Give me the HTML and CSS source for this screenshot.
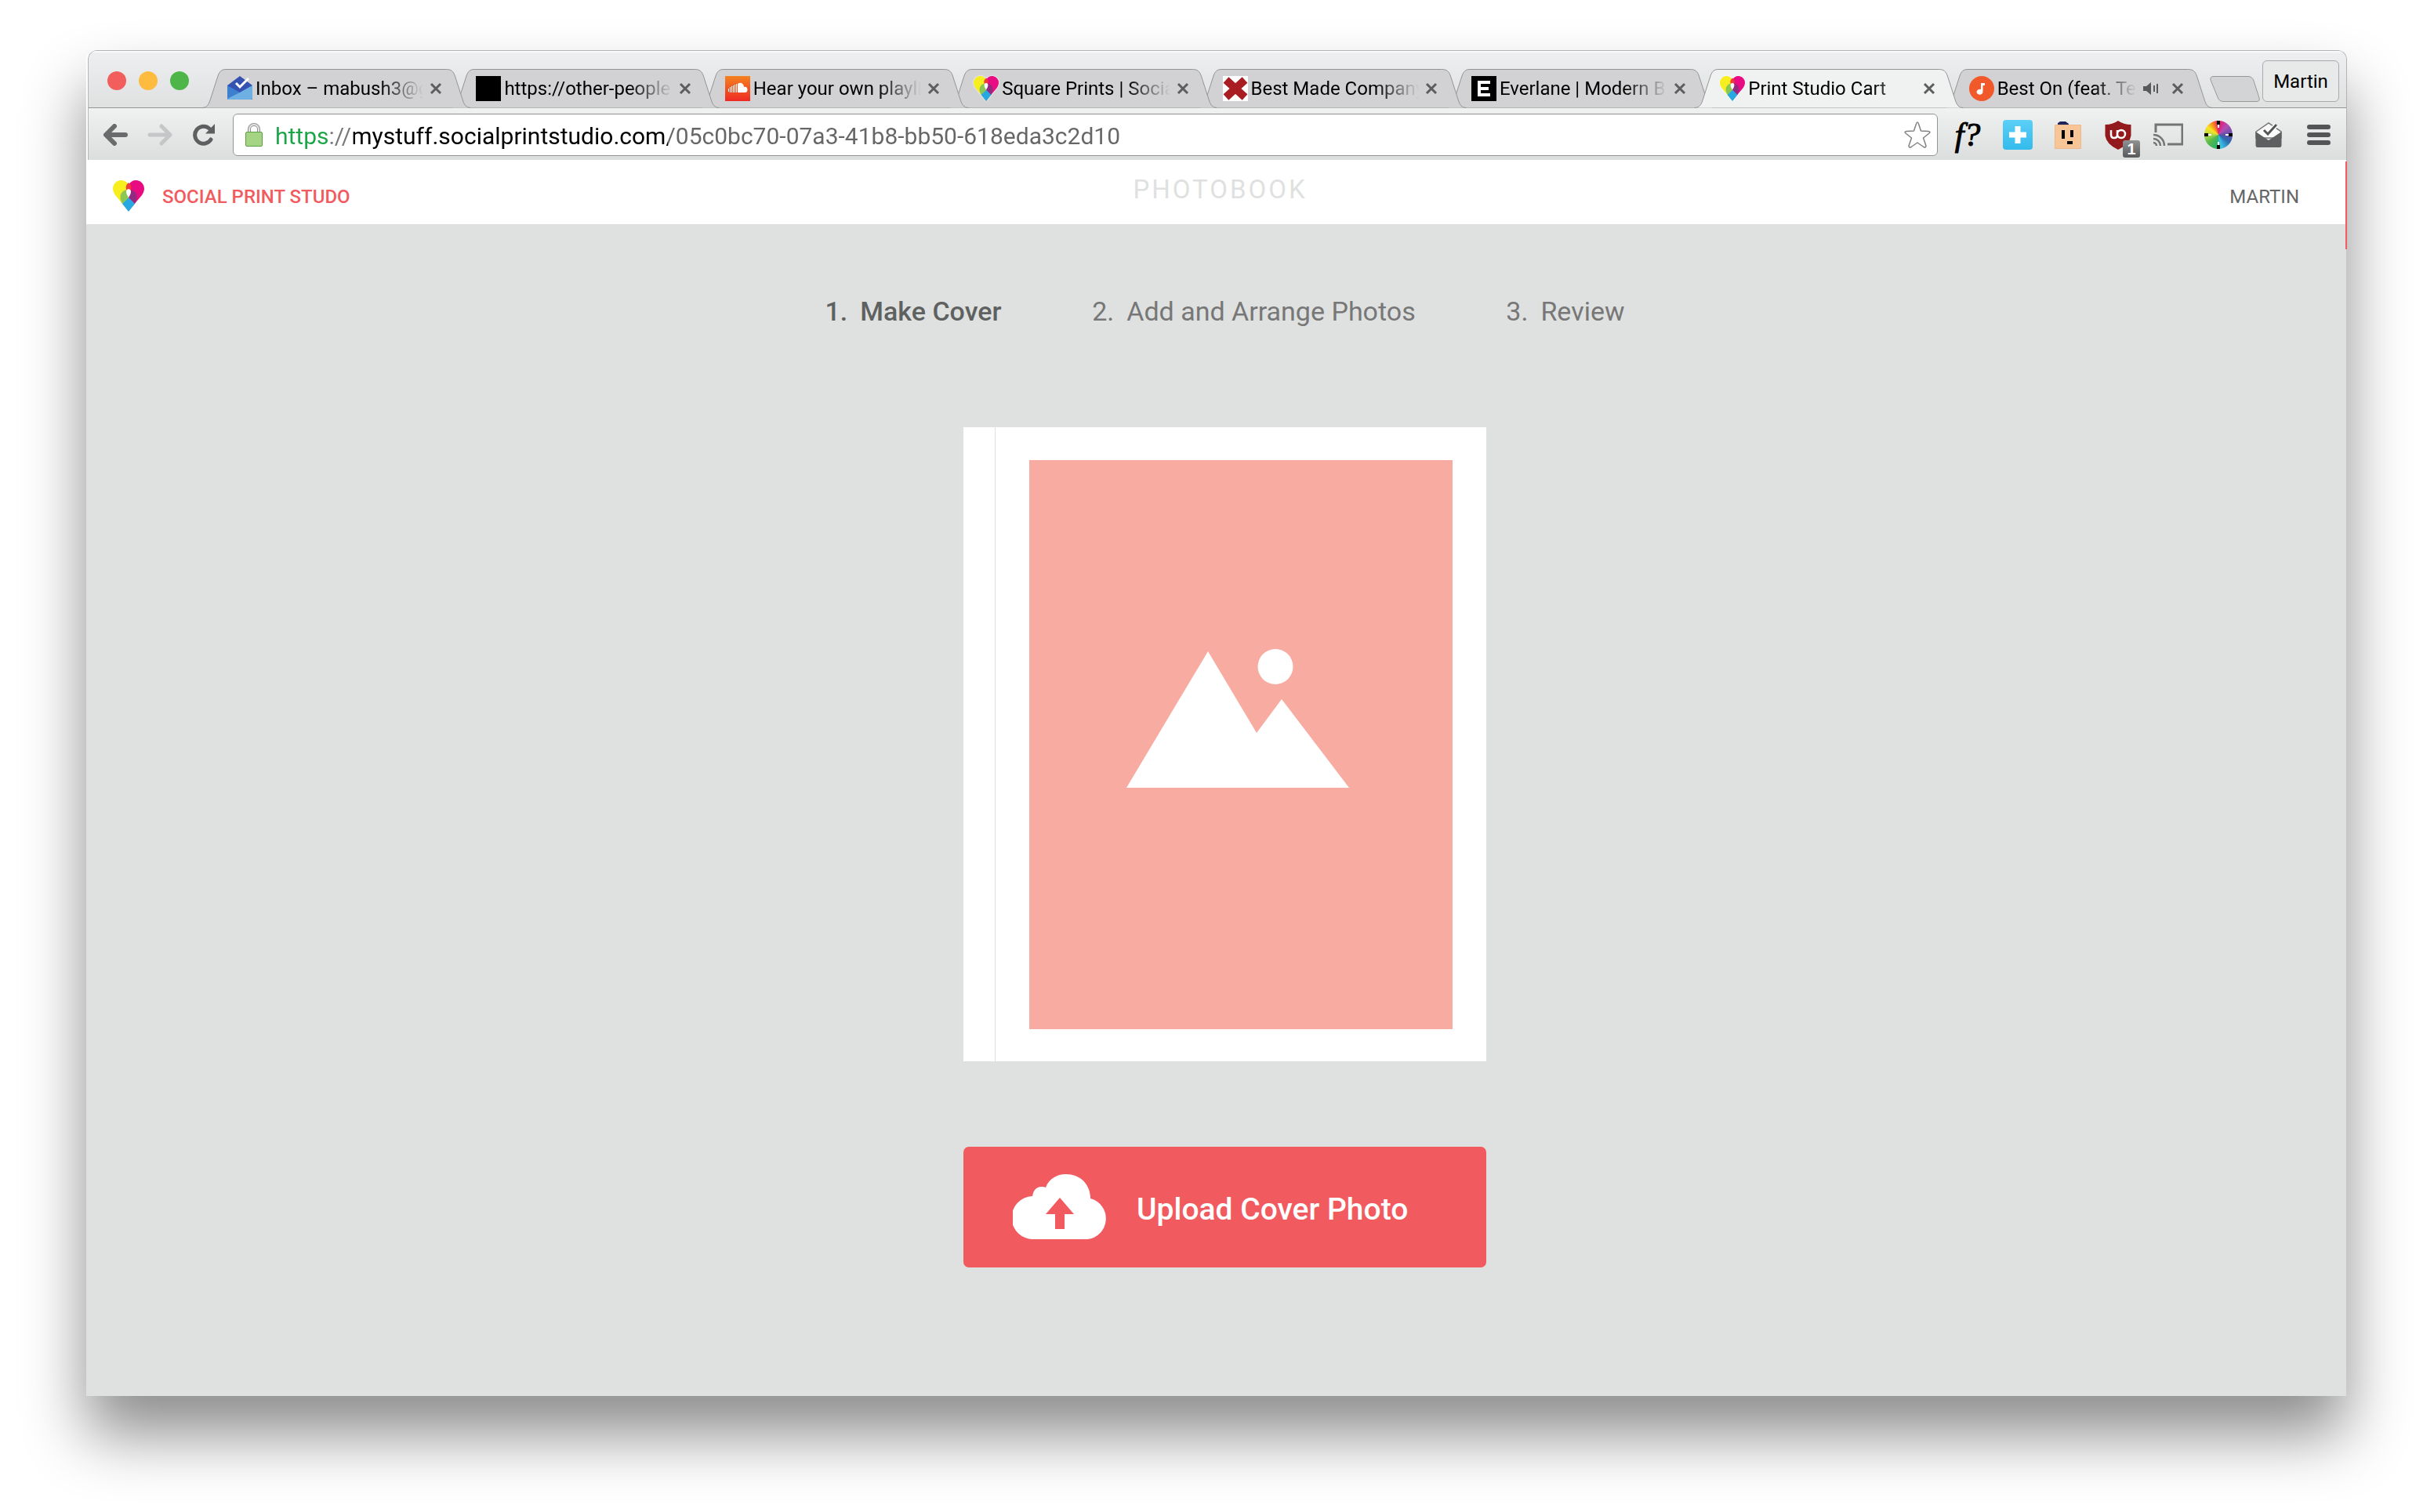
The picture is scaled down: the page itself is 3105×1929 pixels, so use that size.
FILE: index.html
```html
<!DOCTYPE html>
<html lang="en">
<head>
<meta charset="utf-8">
<title>Print Studio Cart</title>
<link rel="stylesheet" href="styles.css">
</head>
<body>
<svg class="defs" aria-hidden="true">
  <symbol id="heart" viewBox="0 0 40 40">
    <path fill="#f6ee1f" d="M20 39L3 19C1 16 0 13 0 10.500A10.500 10.500 0 0 1 20 6Z"/>
    <path fill="#e90b82" d="M20 39L37 19C39 16 40 13 40 10.500A10.500 10.500 0 0 0 20 6Z"/>
    <path fill="#ee3b3a" d="M20 3C16 6 16 10 18 14H22C24 10 24 6 20 3Z"/>
    <path fill="#8bc751" d="M17 12C8 15 8 23 12 30L20 22Z"/>
    <path fill="#932980" d="M23 12C32 15 32 23 28 30L20 22Z"/>
    <path fill="#fff" d="M20 11C16 12 16 16 20 22C24 16 24 12 20 11Z"/>
    <path fill="#27a8e0" d="M20 22L12 30L20 40L28 30Z"/>
  </symbol>
  <symbol id="tab-shape" viewBox="0 0 344 50" preserveAspectRatio="none">
    <path vector-effect="non-scaling-stroke" d="M0 49.500C6 49 8 46 10 40L20 9C22 3 25 .500 30 .500H312C318 .500 321 3 323 9L333 40C335 46 337 49 343 49.500"/>
  </symbol>
  <symbol id="cross" viewBox="0 0 16 16"><path d="M2 2L14 14M14 2L2 14" stroke="#5c5d5e" stroke-width="3" fill="none"/></symbol>
</svg>

<div class="window">
  <div class="chrome">
    <div class="titlebar">
      <div class="lights">
        <button class="light light-close" aria-label="Close window"></button>
        <button class="light light-min" aria-label="Minimise"></button>
        <button class="light light-zoom" aria-label="Zoom"></button>
      </div>
      <nav class="tabs" aria-label="Tabs">
        <div class="tab">
          <svg class="shape"><use href="#tab-shape"/></svg>
          <svg class="favicon" viewBox="0 0 32 32"><path fill="#3551b2" d="M0 12L16 0L32 12V24H0Z"/><path fill="#3d80d0" d="M0 12L16 21L32 12V30H0Z"/><path fill="#6fb0e4" d="M32 12V28Q32 30 30 30H2Q0 30 0 29L16 21Z"/><path fill="none" stroke="#fff" stroke-width="3" d="M11 9L16 14L27 3"/></svg>
          <a class="title" href="#">Inbox – mabush3@g</a>
          <button class="close" aria-label="Close tab"><svg><use href="#cross"/></svg></button>
        </div>
        <div class="tab">
          <svg class="shape"><use href="#tab-shape"/></svg>
          <svg class="favicon" viewBox="0 0 32 32"><path d="M0 0H32V32H0Z"/></svg>
          <a class="title" href="#">https://other-people</a>
          <button class="close" aria-label="Close tab"><svg><use href="#cross"/></svg></button>
        </div>
        <div class="tab">
          <svg class="shape"><use href="#tab-shape"/></svg>
          <svg class="favicon" viewBox="0 0 32 32"><defs><linearGradient id="sc" x2="0" y2="1"><stop stop-color="#f5821f"/><stop offset="1" stop-color="#ee2a24"/></linearGradient></defs><path fill="url(#sc)" d="M0 0H32V32H0Z"/><path stroke="#fff" d="M4.500 16v4M6.500 14v7M8.500 13v8M10.500 12v9M12.500 11v10M14.500 10v11"/><path fill="#fff" d="M16 10C20 7 24 10 24 14C27 13 28.500 15 28.500 17.500Q28.500 21 25 21H16Z"/></svg>
          <a class="title" href="#">Hear your own playli</a>
          <button class="close" aria-label="Close tab"><svg><use href="#cross"/></svg></button>
        </div>
        <div class="tab">
          <svg class="shape"><use href="#tab-shape"/></svg>
          <svg class="favicon halo"><use href="#heart"/></svg>
          <a class="title" href="#">Square Prints | Socia</a>
          <button class="close" aria-label="Close tab"><svg><use href="#cross"/></svg></button>
        </div>
        <div class="tab">
          <svg class="shape"><use href="#tab-shape"/></svg>
          <svg class="favicon" viewBox="0 0 32 32"><path fill="#fff" d="M0 0H32V32H0Z"/><path stroke="#a91d22" stroke-width="10" d="M4 5L28 27M28 5L4 27"/></svg>
          <a class="title" href="#">Best Made Company</a>
          <button class="close" aria-label="Close tab"><svg><use href="#cross"/></svg></button>
        </div>
        <div class="tab">
          <svg class="shape"><use href="#tab-shape"/></svg>
          <svg class="favicon" viewBox="0 0 32 32"><path d="M0 0H32V32H0Z"/><path fill="none" stroke="#fff" stroke-width="4" d="M24 8H10V24H24M10 16H22"/></svg>
          <a class="title" href="#">Everlane | Modern B</a>
          <button class="close" aria-label="Close tab"><svg><use href="#cross"/></svg></button>
        </div>
        <div class="tab active">
          <svg class="shape"><use href="#tab-shape"/></svg>
          <svg class="favicon halo"><use href="#heart"/></svg>
          <a class="title" href="#" aria-current="page">Print Studio Cart</a>
          <button class="close" aria-label="Close tab"><svg><use href="#cross"/></svg></button>
        </div>
        <div class="tab">
          <svg class="shape"><use href="#tab-shape"/></svg>
          <svg class="favicon" viewBox="0 0 32 32"><circle cx="16" cy="16" r="16" fill="#f2592a"/><path fill="#fff" d="M15 9H20V12H17.500V20A4 3.500 0 1 1 15 17Z"/></svg>
          <a class="title" href="#">Best On (feat. Tei</a>
          <svg class="sound" viewBox="0 0 20 18"><path fill="#58595b" d="M0 6H4L10 1V17L4 12H0Z"/><path stroke="#58595b" stroke-width="2" d="M14 5V13M18 3V15"/></svg>
          <button class="close" aria-label="Close tab"><svg><use href="#cross"/></svg></button>
        </div>
      </nav>
      <button class="new-tab" aria-label="New tab"><svg viewBox="0 0 64 33"><path fill="#d3d4d5" stroke="#97989a" d="M5 .500H49Q54 .500 56 6L63 28Q64 32.500 60 32.500H17Q12 32.500 10 27L1 5Q0 .500 5 .500Z"/></svg></button>
      <button class="profile">Martin</button>
    </div>

    <div class="toolbar">
      <button class="tool nav" aria-label="Back"><svg width="32" height="28" viewBox="0 0 32 28"><path fill="none" stroke="#6a6b6c" stroke-width="6" stroke-linecap="round" stroke-linejoin="round" d="M14 3L3 14L14 25M4 14H28"/></svg></button>
      <button class="tool nav" aria-label="Forward"><svg width="32" height="28" viewBox="0 0 32 28"><path fill="none" stroke="#c5c6c7" stroke-width="5" stroke-linecap="round" stroke-linejoin="round" d="M18 3L29 14L18 25M28 14H3"/></svg></button>
      <button class="tool nav" aria-label="Reload"><svg width="28" height="28" viewBox="0 0 28 28"><path fill="none" stroke="#5e5f60" stroke-width="5" stroke-linecap="round" d="M23 20A11 11 0 1 1 21 6"/><path fill="#5e5f60" d="M28 0V12.500H16Z"/></svg></button>
      <div class="omnibox">
        <svg width="22" height="30" viewBox="0 0 22 30"><path fill="none" stroke="#8d8e8f" stroke-width="4" d="M5 13V8A6 6 0 0 1 17 8V13"/><path fill="none" stroke="#e4e5e5" stroke-width="2" d="M5 13V8A6 6 0 0 1 17 8V13"/><rect x=".500" y="11.500" width="21" height="18" rx="1.500" fill="#a5d483" stroke="#5d9f45"/></svg>
        <input class="url" type="text" aria-label="Address" value="https://mystuff.socialprintstudio.com/05c0bc70-07a3-41b8-bb50-618eda3c2d10">
        <button class="star" aria-label="Bookmark"><svg width="34" height="34" viewBox="0 0 34 34"><path fill="#fff" stroke="#808183" stroke-width="1.500" stroke-linejoin="round" d="M17 1Q18 1 18.500 3L21.500 12L31 12.500Q34 13 32 15L24.500 21L28 31Q28 34 25 32.500L17 27L9 32.500Q6 34 6 31L9.500 21L2 15Q0 13 3 12.500L12.500 12L15.500 3Q16 1 17 1Z"/></svg></button>
      </div>
      <button class="tool fount" aria-label="Font finder">f?</button>
      <button class="tool" aria-label="Add"><svg width="38" height="38" viewBox="0 0 38 38"><defs><linearGradient id="sky" x2="0" y2="1"><stop stop-color="#5bcff7"/><stop offset="1" stop-color="#33bbec"/></linearGradient></defs><rect width="38" height="38" rx="4" fill="url(#sky)"/><path stroke="#fff" stroke-width="7" d="M19 8V30M8 19H30"/></svg></button>
      <button class="tool" aria-label="Face"><svg width="34" height="35" viewBox="0 0 34 35"><path fill="#20245b" d="M4 5V2L7 0H14L18 3V5Z"/><path fill="#f7c596" stroke="#ecb98c" d="M.500 4.500H33.500V34.500H.500Z"/><path d="M9 11H13V22H9ZM20 11H24V20H20ZM16 25H23V29H16Z"/></svg></button>
      <button class="tool" aria-label="Blocker, 1 blocked"><svg width="34" height="37" viewBox="0 0 34 37"><path fill="#921a1d" d="M17 0Q24 5 33.500 5V19Q32 30 17 37Q2 30 .500 19V5Q10 5 17 0Z"/><path fill="none" stroke="#fff" stroke-width="2.500" d="M8 12V18Q8 22 12 22T16 18V12M16 17A5 5 0 1 0 26 17A5 5 0 1 0 16 17"/></svg><span class="badge">1</span></button>
      <button class="tool" aria-label="Cast"><svg width="38" height="30" viewBox="0 0 38 30"><path fill="none" stroke="#747576" stroke-width="3" d="M3 12V2H37V27H18"/><path fill="none" stroke="#747576" stroke-width="2.500" d="M0 15A14 14 0 0 1 14 29M0 20A9 9 0 0 1 9 29M0 25A4 4 0 0 1 4 29"/></svg></button>
      <button class="tool" aria-label="Colour picker"><span class="wheel"><svg width="36" height="36" viewBox="0 0 36 36"><path stroke="#fff" stroke-width="2" d="M18 0V9M18 27V36M0 18H9M27 18H36"/><path stroke="#000" stroke-width="4" d="M18 0V5M18 31V36M0 18H5M31 18H36"/></svg></span></button>
      <button class="tool" aria-label="Inbox"><svg width="34" height="32" viewBox="0 0 34 32"><path fill="#fafafa" stroke="#747576" stroke-width="1.500" d="M1 12L17 1L33 12V20H1Z"/><path fill="#5e5f60" d="M.500 12L17 23L33.500 12V29Q33.500 32 31 32H3Q.500 32 .500 29Z"/><path fill="none" stroke="#fff" stroke-width="6" d="M11 10L16 15L27 3"/><path fill="none" stroke="#555657" stroke-width="3" d="M11 10L16 15L27 3"/></svg></button>
      <button class="tool" aria-label="Menu"><svg width="30" height="26" viewBox="0 0 30 26"><path stroke="#545556" stroke-width="6" stroke-linecap="round" d="M3 3H27M3 13H27M3 23H27"/></svg></button>
    </div>
  </div>

  <div class="page">
    <header class="site-header">
      <a class="brand" href="#"><svg width="40" height="40"><use href="#heart"/></svg>SOCIAL PRINT STUDO</a>
      <h1>PHOTOBOOK</h1>
      <a class="account" href="#">MARTIN</a>
    </header>
    <main>
      <ol class="steps">
        <li class="current"><span>1.</span><span>Make Cover</span></li>
        <li><span>2.</span><span>Add and Arrange Photos</span></li>
        <li><span>3.</span><span>Review</span></li>
      </ol>
      <div class="book">
        <div class="spine"></div>
        <div class="cover">
          <div class="placeholder">
            <svg width="284" height="178" viewBox="0 0 284 178"><path fill="#fff" d="M0 177L104 3L166 107L198 64L284 177Z"/><circle cx="190" cy="22.500" r="22.500" fill="#fff"/></svg>
          </div>
        </div>
      </div>
      <button class="upload">
        <svg width="120" height="83" viewBox="0 0 120 83"><path fill="#fff" d="M27 83A27 27 0 0 1 25 28Q27 16 37 16Q40 16 42 17C46 6 56 0 68 0C86 0 99 13 99 31A26.500 26.500 0 0 1 95 83Z"/><path fill="#f15b60" d="M60 30L78 51H66V70H54V51H42Z"/></svg>
        <span>Upload Cover Photo</span>
      </button>
    </main>
    <div class="scroll-mark"></div>
  </div>
</div>
</body>
</html>
```
FILE: styles.css
```css
* { box-sizing: border-box; }

body {
  margin: 0;
  min-height: 100vh;
  padding: 64px 112px 148px 110px;
  display: flex;
  background: #fff;
  font-family: Roboto, "Liberation Sans", sans-serif;
  color: #000;
}

button {
  margin: 0;
  padding: 0;
  border: 0;
  background: none;
  font: inherit;
  color: inherit;
}

a { color: inherit; text-decoration: none; }
svg { display: block; flex: none; }
.defs { position: absolute; width: 0; height: 0; }

.window {
  flex: 1;
  min-width: 0;
  display: flex;
  flex-direction: column;
  border-radius: 12px 12px 0 0;
  box-shadow: 0 49px 80px rgba(0, 0, 0, .45);
}

/* Browser chrome */
.chrome {
  margin: 0 -1px 0 2px;
  border: 1px solid #b3b4b5;
  border-bottom: 0;
  border-radius: 12px 12px 0 0;
  background: #e2e3e3;
  overflow: hidden;
}

.titlebar {
  height: 73px;
  display: flex;
  align-items: flex-end;
  padding: 0 9px 0 24px;
  background: linear-gradient(#eeeff1, #dfe0e0);
  box-shadow: inset 0 2px #fafafa, inset 0 -1px #939495;
}

.lights { display: flex; gap: 16px; align-self: flex-start; padding-top: 26px; }
.light { width: 24px; height: 24px; border-radius: 50%; }
.light-close { background: #f25e5c; }
.light-min { background: #fdbb40; }
.light-zoom { background: #4eb648; }

.tabs { flex: 1; min-width: 0; display: flex; margin-left: 17px; }

.tab {
  position: relative;
  flex: 1 1 0;
  min-width: 0;
  height: 50px;
  display: flex;
  align-items: center;
  padding: 0 37px 0 32px;
}
.tab + .tab { margin-left: -26px; }
.tab:nth-child(1) { z-index: 8; }
.tab:nth-child(2) { z-index: 7; }
.tab:nth-child(3) { z-index: 6; }
.tab:nth-child(4) { z-index: 5; }
.tab:nth-child(5) { z-index: 4; }
.tab:nth-child(6) { z-index: 3; }
.tab:nth-child(8) { z-index: 1; }
.tab.active { z-index: 9; }

.shape {
  position: absolute;
  inset: 0;
  width: 100%;
  height: 100%;
  z-index: -1;
  fill: #d2d2d4;
  stroke: #939495;
}
.active .shape { fill: #f0f1f1; }

.favicon { width: 32px; height: 32px; }
.halo { filter: drop-shadow(0 0 1px #fff); }

.title {
  flex: 1;
  min-width: 0;
  margin: 0 4px;
  overflow: hidden;
  white-space: nowrap;
  font-size: 24px;
  line-height: 32px;
  mask-image: linear-gradient(to left, transparent 4px, #000 60px);
}

.sound { width: 20px; height: 18px; margin-right: 16px; }
.close svg { width: 16px; height: 16px; }

.new-tab { margin: 0 3px 8px -4px; }
.new-tab svg { width: 64px; height: 33px; }

.profile {
  width: 98px;
  height: 53px;
  margin-bottom: 8px;
  border: 1px solid #a9aaab;
  border-radius: 6px;
  background: #e8e9e9;
  font-size: 24px;
}

.toolbar {
  display: flex;
  align-items: center;
  padding: 7px 3px 5px 7px;
  background: linear-gradient(#f0f1f1, #dcdddd);
}

.tool {
  position: relative;
  width: 64px;
  height: 40px;
  display: flex;
  align-items: center;
  justify-content: center;
}
.tool.nav { width: 56px; }

.omnibox {
  flex: 1;
  min-width: 0;
  height: 54px;
  display: flex;
  align-items: center;
  gap: 16px;
  margin: 0 6px 0 9px;
  padding: 0 8px 0 15px;
  border: 1px solid #939495;
  border-radius: 6px;
  background: #fff;
}

/* The scheme is green, the host black and the rest grey. */
.url {
  flex: 1;
  min-width: 0;
  height: 44px;
  padding: 2px 0 0;
  border: 0;
  outline: 0;
  font-family: inherit;
  font-size: 30px;
  color: #666;
  background: linear-gradient(to right, #1ba548 68px, #777 68px 100px, #000 100px 501px, #666 501px);
  background-clip: text;
  -webkit-text-fill-color: transparent;
}

.fount { font: italic 42px/40px "Liberation Serif", serif; -webkit-text-stroke: 1px #000; }

.badge {
  position: absolute;
  right: 4px;
  bottom: -9px;
  width: 22px;
  height: 22px;
  border-radius: 3px;
  background: linear-gradient(#909192, #58595a);
  color: #fff;
  font: bold 20px/22px "Liberation Sans", sans-serif;
}

.wheel {
  border-radius: 50%;
  background: conic-gradient(#e9186b, #b04fb5 45deg, #5d50a5 90deg, #2c6cb0 125deg, #3cc0e8 165deg, #2fb26a 190deg, #54b948 230deg, #b2d84b 270deg, #fbe420 305deg, #f58220 335deg, #e9186b);
}

/* Page */
.page {
  position: relative;
  flex: 1;
  background: #dfe1e0;
}

.site-header {
  height: 82px;
  display: grid;
  grid-template-columns: 1fr auto 1fr;
  align-items: start;
  padding: 18px 34px 0;
  background: #fff;
  font-weight: 500;
  font-size: 24px;
  line-height: 42px;
}

.brand { display: flex; gap: 23px; margin-top: 8px; color: #f15b60; }

.site-header h1 {
  margin: 0;
  padding-left: 10px;
  font-size: 33px;
  font-weight: 400;
  line-height: 40px;
  letter-spacing: 3px;
  color: #dfe1e0;
}

.account { justify-self: end; margin: 8px 26px 0 0; color: #666; font-weight: 400; }

main {
  display: flex;
  flex-direction: column;
  align-items: center;
  padding: 91px 0 100px 22px;
}

.steps {
  width: 1020px;
  max-width: 100%;
  display: flex;
  justify-content: space-between;
  margin: 0 0 128px;
  padding: 0;
  list-style: none;
  font-size: 34px;
  line-height: 40px;
  color: #777;
}
.steps li { display: flex; gap: 16px; }
.steps .current { color: #5f6160; font-weight: 500; }

.book {
  width: 667px;
  max-width: 100%;
  display: flex;
  background: #fff;
}
.spine { width: 41px; border-right: 1px solid #dfe1e0; }
.cover { flex: 1; padding: 42px 43px 41px; }
.placeholder {
  height: 726px;
  padding: 241px 0 0 124px;
  background: #f8aba0;
}

.upload {
  width: 667px;
  max-width: 100%;
  height: 154px;
  margin-top: 109px;
  padding: 0 0 2px 63px;
  display: flex;
  align-items: center;
  gap: 38px;
  border-radius: 7px;
  background: #f15b60;
  color: #fff;
  font-size: 39px;
  font-weight: 500;
}
.upload span { padding-top: 8px; }

/* Scroll position marker at the window's right edge */
.scroll-mark {
  position: absolute;
  top: 2px;
  right: -1px;
  width: 2px;
  height: 112px;
  background: #f15b60;
}
```
